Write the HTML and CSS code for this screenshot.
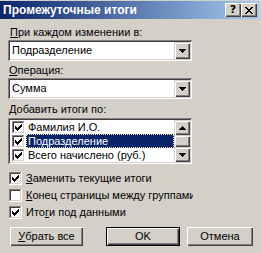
FILE: index.html
```html
<!DOCTYPE html>
<html lang="ru">
<head>
<meta charset="utf-8">
<title>Промежуточные итоги</title>
<link rel="stylesheet" href="styles.css">
</head>
<body>
<div class="win">
  <div class="title">
    <span class="title-text">Промежуточные итоги</span>
    <div class="caption-btns">
      <span class="cbtn help">?</span>
      <span class="cbtn close"><svg width="8" height="7" viewBox="0 0 8 7" shape-rendering="crispEdges"><path fill="#000" d="M0 0h2v1H0zM6 0h2v1H6zM1 1h2v1H1zM5 1h2v1H5zM2 2h4v1H2zM3 3h2v1H3zM2 4h4v1H2zM1 5h2v1H1zM5 5h2v1H5zM0 6h2v1H0zM6 6h2v1H6z"/></svg></span>
    </div>
  </div>
  <div class="content">
    <div class="label l1"><span class="u">П</span>ри каждом изменении в:</div>
    <div class="combo c1">
      <span class="combo-text">Подразделение</span>
      <span class="dd"><svg width="7" height="4" viewBox="0 0 7 4" shape-rendering="crispEdges"><path d="M0 0h7v1H0zM1 1h5v1H1zM2 2h3v1H2zM3 3h1v1H3z"/></svg></span>
    </div>
    <div class="label l2"><span class="u">О</span>перация:</div>
    <div class="combo c2">
      <span class="combo-text">Сумма</span>
      <span class="dd"><svg width="7" height="4" viewBox="0 0 7 4" shape-rendering="crispEdges"><path d="M0 0h7v1H0zM1 1h5v1H1zM2 2h3v1H2zM3 3h1v1H3z"/></svg></span>
    </div>
    <div class="label l3"><span class="u">Д</span>обавить итоги по:</div>
    <div class="listbox">
      <div class="items">
        <div class="item">
          <svg class="cb" width="13" height="13" viewBox="0 0 13 13" shape-rendering="crispEdges"><rect width="13" height="13" fill="#fff"/><path fill="#808080" d="M0 0h12v1H1v11H0z"/><path fill="#404040" d="M1 1h10v1H2v9H1z"/><path fill="#D4D0C8" d="M1 11h11v1H1zM11 1h1v10h-1z"/><path fill="#fff" d="M0 12h13v1H0zM12 0h1v12h-1z"/><path fill="#000" d="M3 5h1v3H3zM4 6h1v3H4zM5 7h1v3H5zM6 6h1v3H6zM7 5h1v3H7zM8 4h1v3H8zM9 3h1v3H9z"/></svg>
          <span class="txt">Фамилия И.О.</span>
        </div>
        <div class="item sel">
          <svg class="cb" width="13" height="13" viewBox="0 0 13 13" shape-rendering="crispEdges"><rect width="13" height="13" fill="#fff"/><path fill="#808080" d="M0 0h12v1H1v11H0z"/><path fill="#404040" d="M1 1h10v1H2v9H1z"/><path fill="#D4D0C8" d="M1 11h11v1H1zM11 1h1v10h-1z"/><path fill="#fff" d="M0 12h13v1H0zM12 0h1v12h-1z"/><path fill="#000" d="M3 5h1v3H3zM4 6h1v3H4zM5 7h1v3H5zM6 6h1v3H6zM7 5h1v3H7zM8 4h1v3H8zM9 3h1v3H9z"/></svg>
          <span class="txt">Подразделение</span>
        </div>
        <div class="item">
          <svg class="cb" width="13" height="13" viewBox="0 0 13 13" shape-rendering="crispEdges"><rect width="13" height="13" fill="#fff"/><path fill="#808080" d="M0 0h12v1H1v11H0z"/><path fill="#404040" d="M1 1h10v1H2v9H1z"/><path fill="#D4D0C8" d="M1 11h11v1H1zM11 1h1v10h-1z"/><path fill="#fff" d="M0 12h13v1H0zM12 0h1v12h-1z"/><path fill="#000" d="M3 5h1v3H3zM4 6h1v3H4zM5 7h1v3H5zM6 6h1v3H6zM7 5h1v3H7zM8 4h1v3H8zM9 3h1v3H9z"/></svg>
          <span class="txt">Всего начислено (руб.)</span>
        </div>
      </div>
      <div class="vscroll">
        <span class="sbtn"><svg width="7" height="4" viewBox="0 0 7 4" shape-rendering="crispEdges"><path d="M3 0h1v1H3zM2 1h3v1H2zM1 2h5v1H1zM0 3h7v1H0z"/></svg></span>
        <span class="thumb"></span>
        <span class="sbtn"><svg width="7" height="4" viewBox="0 0 7 4" shape-rendering="crispEdges"><path d="M0 0h7v1H0zM1 1h5v1H1zM2 2h3v1H2zM3 3h1v1H3z"/></svg></span>
      </div>
    </div>
    <div class="checks">
      <div class="chk">
        <svg class="cb" width="13" height="13" viewBox="0 0 13 13" shape-rendering="crispEdges"><rect width="13" height="13" fill="#fff"/><path fill="#808080" d="M0 0h12v1H1v11H0z"/><path fill="#404040" d="M1 1h10v1H2v9H1z"/><path fill="#D4D0C8" d="M1 11h11v1H1zM11 1h1v10h-1z"/><path fill="#fff" d="M0 12h13v1H0zM12 0h1v12h-1z"/><path fill="#000" d="M3 5h1v3H3zM4 6h1v3H4zM5 7h1v3H5zM6 6h1v3H6zM7 5h1v3H7zM8 4h1v3H8zM9 3h1v3H9z"/></svg>
        <span class="chk-text"><span class="u">З</span>аменить текущие итоги</span>
      </div>
      <div class="chk">
        <svg class="cb" width="13" height="13" viewBox="0 0 13 13" shape-rendering="crispEdges"><rect width="13" height="13" fill="#fff"/><path fill="#808080" d="M0 0h12v1H1v11H0z"/><path fill="#404040" d="M1 1h10v1H2v9H1z"/><path fill="#D4D0C8" d="M1 11h11v1H1zM11 1h1v10h-1z"/><path fill="#fff" d="M0 12h13v1H0zM12 0h1v12h-1z"/></svg>
        <span class="chk-text"><span class="u">К</span>онец страницы между группами</span>
      </div>
      <div class="chk">
        <svg class="cb" width="13" height="13" viewBox="0 0 13 13" shape-rendering="crispEdges"><rect width="13" height="13" fill="#fff"/><path fill="#808080" d="M0 0h12v1H1v11H0z"/><path fill="#404040" d="M1 1h10v1H2v9H1z"/><path fill="#D4D0C8" d="M1 11h11v1H1zM11 1h1v10h-1z"/><path fill="#fff" d="M0 12h13v1H0zM12 0h1v12h-1z"/><path fill="#000" d="M3 5h1v3H3zM4 6h1v3H4zM5 7h1v3H5zM6 6h1v3H6zM7 5h1v3H7zM8 4h1v3H8zM9 3h1v3H9z"/></svg>
        <span class="chk-text">Ито<span class="u">г</span>и под данными</span>
      </div>
    </div>
    <div class="buttons">
      <div class="btn b-clear"><span class="u">У</span>брать все</div>
      <div class="btn b-ok">OK</div>
      <div class="btn b-cancel">Отмена</div>
    </div>
  </div>
</div>
</body>
</html>
```

FILE: styles.css
```css
* { box-sizing: border-box; }
html, body { margin: 0; padding: 0; }
body {
  width: 261px;
  height: 253px;
  overflow: hidden;
  background: #D4D0C8;
  font-family: "Liberation Sans", Arial, sans-serif;
  font-size: 11px;
  color: #000;
}
.u { text-decoration: underline; text-underline-offset: 1px; }

.win { padding-top: 1px; }

.title {
  height: 18px;
  margin-right: 2px;
  background: linear-gradient(to right, #0A246A, #A6CAF0);
  display: flex;
  align-items: center;
  justify-content: space-between;
  padding: 0 2px 0 3px;
}
.title-text {
  color: #fff;
  font-family: "Liberation Sans", Arial, sans-serif;
  font-weight: bold;
  font-size: 12px;
  line-height: 14px;
  white-space: nowrap;
}
.caption-btns { display: flex; }
.cbtn {
  width: 16px;
  height: 14px;
  background: #D4D0C8;
  box-shadow: inset 1px 1px #fff, inset -1px -1px #404040, inset -2px -2px #808080;
  display: flex;
  align-items: center;
  justify-content: center;
}
.help {
  font-family: "DejaVu Sans", sans-serif;
  font-weight: bold;
  font-size: 11px;
  line-height: 12px;
  padding-bottom: 1px;
}
.close svg { display: block; margin-left: -1px; }

.content { padding: 0 8px; }

.label { line-height: 13px; height: 13px; white-space: nowrap; }
.l1 { margin-top: 7px; padding-left: 2px; }
.l2 { margin-top: 3px; padding-left: 1px; }
.l3 { margin-top: 4px; padding-left: 1px; }

.combo {
  width: 184px;
  height: 21px;
  margin-top: 1px;
  background: #fff;
  box-shadow: inset 1px 1px #808080, inset -1px -1px #fff, inset 2px 2px #404040, inset -2px -2px #D4D0C8;
  display: flex;
  align-items: stretch;
  padding: 2px;
}
.combo-text { flex: 1; line-height: 17px; padding-left: 2px; white-space: nowrap; }
.dd, .sbtn {
  width: 16px;
  background: #D4D0C8;
  box-shadow: inset 1px 1px #D4D0C8, inset 2px 2px #fff, inset -1px -1px #404040, inset -2px -2px #808080;
  display: flex;
  align-items: center;
  justify-content: center;
}
.dd svg, .sbtn svg { display: block; }

.listbox {
  width: 184px;
  height: 46px;
  margin-top: 2px;
  background: #fff;
  box-shadow: inset 1px 1px #808080, inset -1px -1px #fff, inset 2px 2px #404040, inset -2px -2px #D4D0C8;
  padding: 2px;
  display: flex;
}
.items { flex: 1; overflow: hidden; }
.item { height: 14px; display: flex; align-items: center; white-space: nowrap; }
.item .cb { margin-left: 2px; margin-right: 1px; flex: none; display: block; }
.item .txt { flex: 1; line-height: 14px; height: 14px; padding-left: 2px; overflow: hidden; }
.item.sel .txt {
  background: #0A246A;
  color: #fff;
  outline: 1px dotted #F0E8A0;
  outline-offset: -1px;
}
.vscroll { width: 16px; display: flex; flex-direction: column; }
.vscroll .sbtn { height: 15px; }
.thumb {
  flex: 1;
  background: #D4D0C8;
  box-shadow: inset 1px 1px #D4D0C8, inset 2px 2px #fff, inset -1px -1px #404040, inset -2px -2px #808080;
}

.checks { margin-top: 6px; width: 185px; overflow: hidden; }
.chk { height: 17px; display: flex; align-items: center; white-space: nowrap; }
.chk .cb { flex: none; display: block; margin-left: 1px; margin-right: 4px; }
.chk-text { line-height: 13px; }

.buttons { margin-top: 6px; display: flex; }
.btn {
  height: 19px;
  background: #D4D0C8;
  box-shadow: inset 1px 1px #fff, inset -1px -1px #404040, inset -2px -2px #808080;
  display: flex;
  align-items: center;
  justify-content: center;
  line-height: 13px;
  white-space: nowrap;
}
.b-clear { width: 73px; margin-left: 2px; }
.b-ok {
  width: 74px;
  margin-left: 23px;
  box-shadow: inset 0 0 0 1px #000, inset 2px 2px #fff, inset -2px -2px #404040, inset -3px -3px #808080;
}
.b-cancel { width: 66px; margin-left: 7px; }
```
